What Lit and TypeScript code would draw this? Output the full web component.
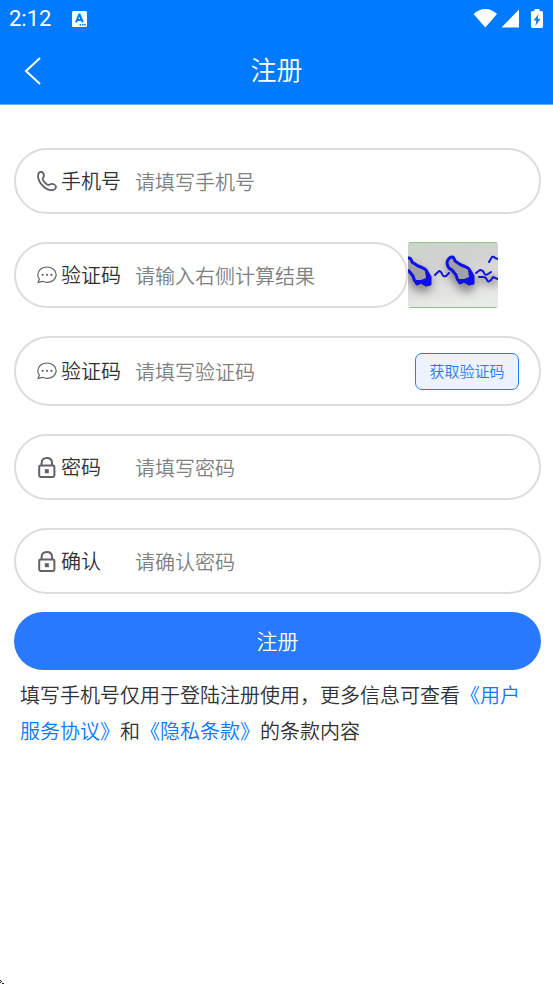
import { LitElement, html, css, svg } from "lit";
import { customElement, property } from "lit/decorators.js";

const phoneIcon = html`<svg class="icon" viewBox="0 0 20 20" aria-hidden="true">
  <path d="M1.2 3.6C1.6 1.8 3.2.8 4.6 1C6.2 1.3 6.8 3 6.9 4.8C7 6.4 5.6 6.8 5.8 8.2C6.2 10 8.8 13.2 11 13.8C12.6 14.2 13 12.8 14.6 12.9C16.4 13 18.9 14.2 19 15.6C19.1 17.2 17.5 18.9 15.8 19.1C12.5 19.4 8 17.4 4.9 13.8C2.2 10.6.6 6.6 1.2 3.6Z" />
</svg>`;

const chatIcon = html`<svg class="icon thin" viewBox="0 0 20 20" aria-hidden="true">
  <path d="M10 2C15 2 19.2 5.3 19.2 9.7S15 17.4 10 17.4C8.3 17.4 6.8 17 5.4 16.3L1.2 17.3L2.3 14C1.3 12.8.8 11.3.8 9.7C.8 5.3 5 2 10 2Z" />
  <g class="solid"><circle cx="5.6" cy="9.8" r="1.1" /><circle cx="10" cy="9.8" r="1.1" /><circle cx="14.4" cy="9.8" r="1.1" /></g>
</svg>`;

const lockIcon = html`<svg class="icon bold" viewBox="0 0 20 20" aria-hidden="true">
  <rect x="2.2" y="8.6" width="15.2" height="11.4" rx="1.4" />
  <path d="M4.6 8.4V5.8C4.6 2.8 6.6 .9 9.8 .9S15 2.8 15 5.8V8.4" />
  <rect class="solid" x="7.8" y="12.2" width="4" height="4" />
</svg>`;

const icons = { phone: phoneIcon, chat: chatIcon, lock: lockIcon };

@customElement("status-bar")
class StatusBar extends LitElement {
  static styles = css`
    :host {
      display: flex;
      align-items: center;
      height: 38px;
      padding: 0 10px 0 9px;
      color: #fff;
      font: 400 22px/38px Roboto, sans-serif;
    }
    .app { width: 15px; height: 16px; margin-left: 21px; margin-right: auto; }
    .signals { display: flex; align-items: center; }
    .wifi { width: 24px; height: 20px; margin-right: 4px; }
    .cell { width: 18px; height: 20px; margin-right: 12px; }
    .battery { width: 12px; height: 20px; }
    svg { fill: currentColor; display: block; }
    .cut { fill: #007aff; }
    .mark { fill: none; stroke: #007aff; stroke-width: 2; }
  `;
  render() {
    return html`
      <span>2:12</span>
      <svg class="app" viewBox="0 0 15 16" aria-hidden="true">
        <rect width="15" height="16" rx="1.5" />
        <path class="mark" d="M4 11.4L7.2 3.6H7.6L10.8 11.4M5 9H9.8" />
        <path class="cut" d="M7.5 13h1.5v1.4H7.5zM10 13h1.5v1.4H10zM12.2 13h1.5v1.4h-1.5z" />
      </svg>
      <div class="signals">
        <svg class="wifi" viewBox="0 0 24 20" aria-hidden="true"><path d="M0.6 5C3.6 2 7.6 0 12.3 0S21 2 24 5L12.3 18.4Z" /></svg>
        <svg class="cell" viewBox="0 0 18 20" aria-hidden="true"><path d="M18 0.5V18.4H0.5Z" /></svg>
        <svg class="battery" viewBox="0 0 12 20" aria-hidden="true">
          <path d="M3.5 0H8.5V2H10.5Q12 2 12 3.5V17.5Q12 19 10.5 19H1.5Q0 19 0 17.5V3.5Q0 2 1.5 2H3.5Z" />
          <path class="cut" d="M7.6 5L2.6 11.4H5.4L4.4 17L9.4 9.8H6.6Z" />
        </svg>
      </div>
    `;
  }
}

@customElement("form-field")
class FormField extends LitElement {
  @property() icon: keyof typeof icons = "phone";
  @property() label = "";
  @property() hint = "";
  @property() type = "text";

  static styles = css`
    :host {
      display: flex;
      align-items: center;
      box-sizing: border-box;
      min-height: 66px;
      padding: 0 20px 0 21px;
      border: 2px solid #dcdcdc;
      border-radius: 35px;
      background: #fff;
    }
    label { display: flex; align-items: center; flex: 0 0 98px; color: #303133; font-size: 20px; line-height: 30px; }
    .icon { width: 20px; height: 20px; margin-right: 4px; fill: none; stroke: #606266; stroke-width: 1.8; overflow: visible; }
    .thin { stroke-width: 1.2; }
    .bold { stroke-width: 2; }
    .solid { fill: #606266; stroke: none; }
    input { flex: 1; min-width: 0; height: 30px; padding: 0; border: 0; outline: 0; background: none; font: inherit; font-size: 20px; color: #303133; }
    input::placeholder { color: #808080; opacity: 1; }
  `;
  render() {
    return html`
      <label for="control">${icons[this.icon]}${this.label}</label>
      <input id="control" type=${this.type} placeholder=${this.hint} />
      <slot></slot>
    `;
  }
}

@customElement("captcha-image")
class CaptchaImage extends LitElement {
  static styles = css`
    :host { display: block; }
    svg { display: block; width: 100%; height: 100%; border-radius: 3px; }
    .ink { fill: none; stroke: #1414d8; stroke-width: 2; stroke-linecap: round; stroke-linejoin: round; }
    .shape { fill: #a2a2a4; stroke: #0f0fe8; stroke-width: 3; stroke-linejoin: round; }
    .foot { fill: #0f0fe8; }
    .shade { fill: #444; opacity: 0.55; filter: blur(4px); }
    .edge { fill: #8cc480; }
  `;
  render() {
    const figure = svg`<path class="shape" d="M39 20Q41 15 44 15Q46 15 47 19L53 23Q59 25 61 27L65 34L65 41L61 42L56 39L52 41Q49 38 48 33L44 28Q39 26 39 20Z" />
      <path class="foot" d="M50 37L56 37L61 35L60 28L66 35L66 42L61 43L56 40L52 42Z" />`;
    return html`<svg viewBox="0 0 90 66" preserveAspectRatio="none" role="img" aria-label="captcha">
      <defs>
        <linearGradient id="paper" x1="0" y1="0" x2="0.2" y2="1">
          <stop offset="0" stop-color="#ccd6ca" /><stop offset="0.4" stop-color="#d2d2d2" /><stop offset="1" stop-color="#e8eae7" />
        </linearGradient>
      </defs>
      <rect width="90" height="66" fill="url(#paper)" />
      <path class="shade" d="M0 20L12 26L25 38L21 50L8 49L0 39ZM38 20L52 24L69 38L64 50L53 49L41 34ZM70 34L90 36V43L72 40Z" />
      <g>${figure}</g>
      <g transform="translate(-43 1)">${figure}</g>
      <path class="ink" d="M27 33L31 29Q33 29 34 32T38 34L41 31M68 31L72 28Q75 28 76 31T80 32L83 30M71 35H75Q78 35 79 38T83 38L85 35L90 37M81 20L84 15Q86 14 87 16L90 17" />
      <rect class="edge" width="90" height="1" /><rect class="edge" y="65" width="90" height="1" />
    </svg>`;
  }
}

@customElement("app-root")
class AppRoot extends LitElement {
  static styles = css`
    :host {
      display: flex;
      flex-direction: column;
      min-height: 100vh;
      background: #fff;
      color: #303133;
      font-family: "Noto Sans CJK SC", sans-serif;
      font-weight: 350;
    }
    header { background: #007aff; border-bottom: 1px solid #66afff; }
    nav { display: grid; grid-template-columns: 48px 1fr 48px; align-items: center; height: 66px; color: #fff; }
    .back { display: flex; justify-content: flex-end; padding: 0 7px 0 0; border: 0; background: none; color: inherit; }
    .back svg { width: 17px; height: 28px; fill: none; stroke: currentColor; stroke-width: 2; }
    h1 { margin: 0; padding-bottom: 4px; text-align: center; font-size: 26px; font-weight: inherit; line-height: 36px; }
    form { display: flex; flex-direction: column; gap: 28px; padding: 43px 12px 0 14px; }
    .row { display: flex; }
    .row form-field { flex: 1; }
    .row captcha-image { flex: 0 0 90px; height: 66px; margin-right: 43px; }
    .tall { min-height: 70px; }
    .send { box-sizing: border-box; width: 104px; height: 37px; padding: 0 0 2px; border: 1px solid #2979ff; border-radius: 7px; background: #ecf3ff; color: #2979ff; font: inherit; font-size: 15px; }
    .submit { height: 58px; margin-top: -10px; padding: 0 0 3px; border: 0; border-radius: 29px; background: #2979ff; color: #fff; font: inherit; font-size: 21px; }
    p { margin: 0; padding: 7px 20px 0; font-size: 20px; line-height: 36px; }
    a { color: #007aff; text-decoration: none; }
    .corner { display: block; width: 4px; height: 4px; margin-top: auto; fill: #111; }
  `;
  render() {
    return html`
      <header>
        <status-bar></status-bar>
        <nav>
          <button class="back" type="button" aria-label="返回">
            <svg viewBox="0 0 17 28"><path d="M16 1L2 14L16 27" /></svg>
          </button>
          <h1>注册</h1>
        </nav>
      </header>
      <form>
        <form-field icon="phone" label="手机号" hint="请填写手机号" type="tel"></form-field>
        <div class="row">
          <form-field icon="chat" label="验证码" hint="请输入右侧计算结果"></form-field>
          <captcha-image></captcha-image>
        </div>
        <form-field class="tall" icon="chat" label="验证码" hint="请填写验证码">
          <button class="send" type="button">获取验证码</button>
        </form-field>
        <form-field icon="lock" label="密码" hint="请填写密码" type="password"></form-field>
        <form-field icon="lock" label="确认" hint="请确认密码" type="password"></form-field>
        <button class="submit" type="button">注册</button>
      </form>
      <p>填写手机号仅用于登陆注册使用，更多信息可查看<a href="#terms">《用户服务协议》</a>和<a href="#privacy">《隐私条款》</a>的条款内容</p>
      <svg class="corner" viewBox="0 0 4 4" aria-hidden="true"><path d="M0 0h1v1H0zM1 1h1v1H1zM2 3h2v1H2zM0 2h1v1H0z" /></svg>
    `;
  }
}
